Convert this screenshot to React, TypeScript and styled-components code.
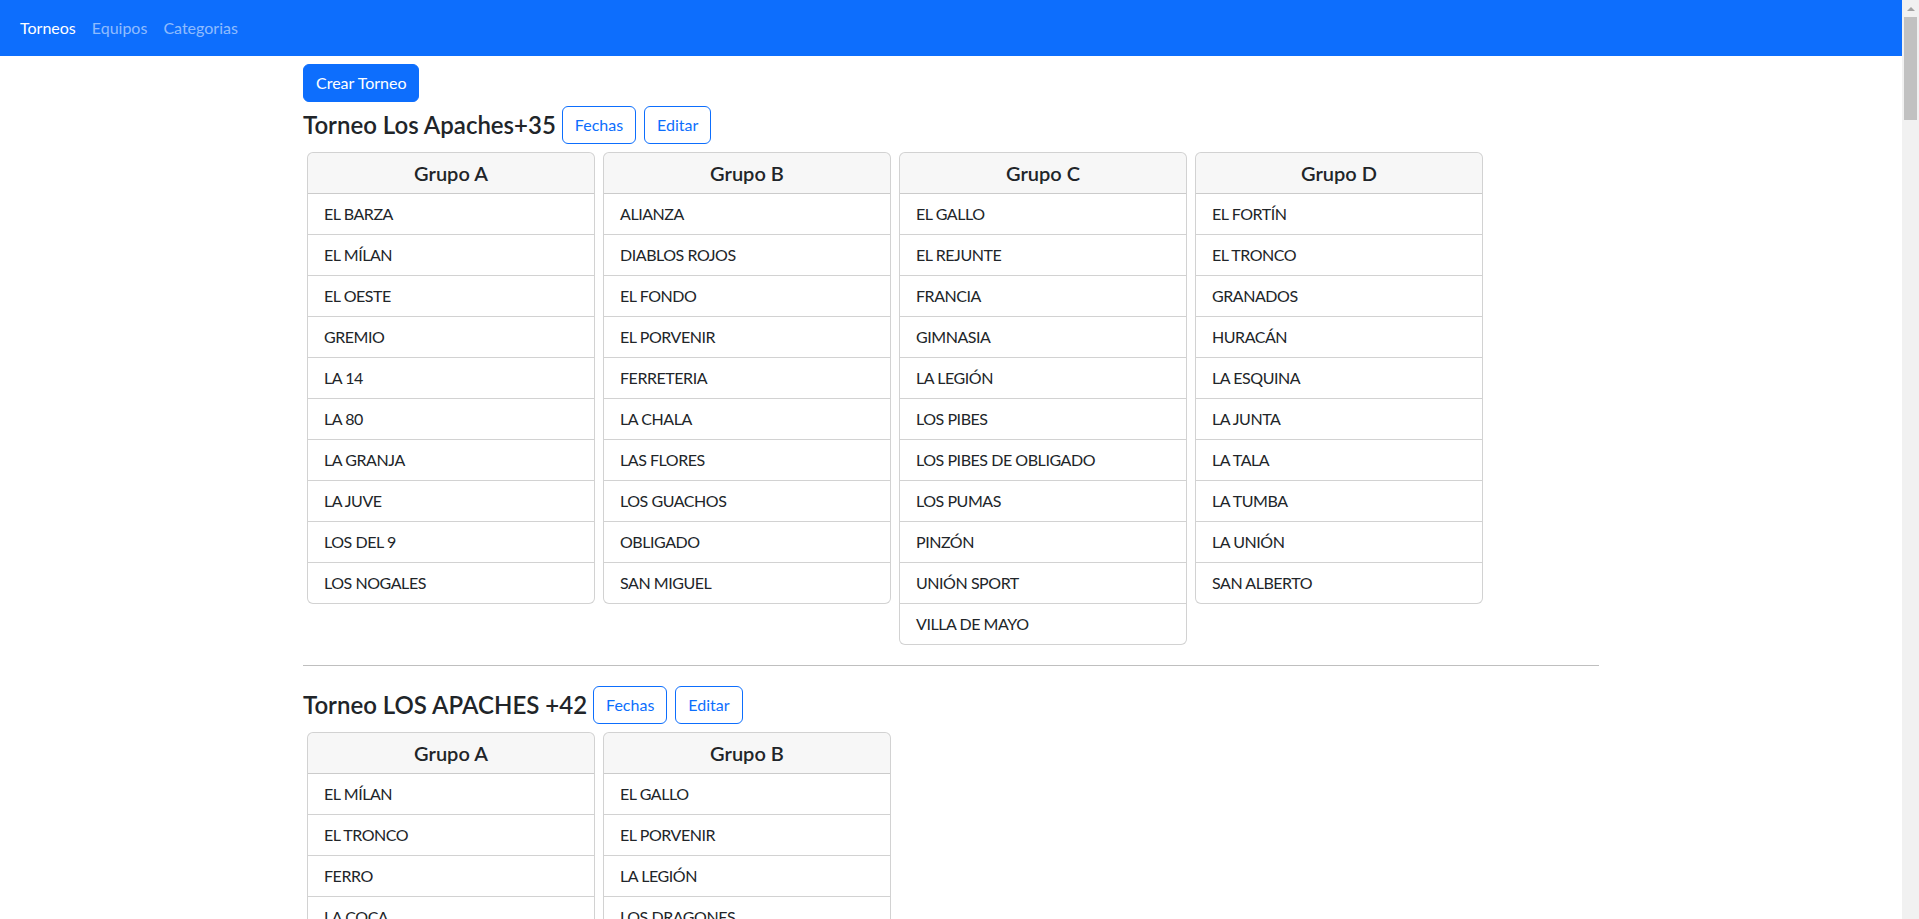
import React from "react";
import styled, { createGlobalStyle } from "styled-components";

const GlobalStyle = createGlobalStyle`
  *, *::before, *::after { box-sizing: border-box; }
  body {
    margin: 0 17px 0 0;
    font-family: Lato, "Open Sans", "Liberation Sans", sans-serif;
    font-size: 16px;
    line-height: 1.5;
    color: #212529;
    background: #fff;
  }
`;

const ScrollTrack = styled.div`
  position: fixed;
  top: 0;
  right: 0;
  width: 17px;
  height: 100vh;
  background: #f1f1f1;
  display: flex;
  flex-direction: column;
  align-items: center;
  z-index: 10;
`;

const ScrollArrow = styled.div`
  height: 17px;
  display: flex;
  align-items: center;
  justify-content: center;
  &::before {
    content: "";
    width: 0;
    height: 0;
    border-left: 4px solid transparent;
    border-right: 4px solid transparent;
    border-bottom: 4px solid #a3a3a3;
  }
`;

const ScrollThumb = styled.div`
  width: 13px;
  height: 103px;
  background: #c1c1c1;
`;

const NavBar = styled.nav`
  background: #0d6efd;
  height: 56px;
  padding: 8px 12px;
  display: flex;
  align-items: center;
`;

const NavLink = styled.a<{ $active?: boolean }>`
  padding: 8px;
  line-height: 24px;
  font-size: 16px;
  color: ${(p) => (p.$active ? "#fff" : "rgba(255,255,255,0.55)")};
  text-decoration: none;
  cursor: pointer;
`;

const Container = styled.main`
  max-width: 1320px;
  margin: 0 auto;
  padding: 8px 12px 0;
`;

const Button = styled.button<{ $outline?: boolean }>`
  font-family: inherit;
  font-size: 16px;
  line-height: 24px;
  padding: 6px 12px;
  border-radius: 6px;
  border: 1px solid #0d6efd;
  background: ${(p) => (p.$outline ? "transparent" : "#0d6efd")};
  color: ${(p) => (p.$outline ? "#0d6efd" : "#fff")};
  cursor: pointer;
`;

const TitleRow = styled.div`
  display: flex;
  align-items: center;
  height: 46px;
  gap: 8px;
`;

const Title = styled.h4`
  margin: 0 -2px 0 0;
  font-size: 24px;
  font-weight: 600;
  line-height: 1.2;
`;

const CardWrap = styled.div`
  display: flex;
  flex-wrap: wrap;
  align-items: flex-start;
`;

const Card = styled.div`
  width: 288px;
  margin: 4px;
  border: 1px solid rgba(0, 0, 0, 0.175);
  border-radius: 6px;
  overflow: hidden;
  background: #fff;
`;

const CardHeader = styled.div`
  padding: 8px 16px;
  background: rgba(0, 0, 0, 0.03);
  border-bottom: 1px solid rgba(0, 0, 0, 0.175);
  text-align: center;
  font-size: 20px;
  font-weight: 600;
  line-height: 24px;
`;

const Item = styled.div`
  padding: 8px 16px;
  line-height: 24px;
  letter-spacing: -0.45px;
  border-bottom: 1px solid rgba(0, 0, 0, 0.175);
  &:last-child { border-bottom: 0; }
`;

const Divider = styled.hr`
  margin: 16px 0;
  border: 0;
  border-top: 1px solid rgba(0, 0, 0, 0.25);
`;

type Torneo = { name: string; groups: { name: string; teams: string[] }[] };

const torneos: Torneo[] = [
  {
    name: "Torneo Los Apaches+35",
    groups: [
      { name: "Grupo A", teams: ["EL BARZA", "EL MÍLAN", "EL OESTE", "GREMIO", "LA 14", "LA 80", "LA GRANJA", "LA JUVE", "LOS DEL 9", "LOS NOGALES"] },
      { name: "Grupo B", teams: ["ALIANZA", "DIABLOS ROJOS", "EL FONDO", "EL PORVENIR", "FERRETERIA", "LA CHALA", "LAS FLORES", "LOS GUACHOS", "OBLIGADO", "SAN MIGUEL"] },
      { name: "Grupo C", teams: ["EL GALLO", "EL REJUNTE", "FRANCIA", "GIMNASIA", "LA LEGIÓN", "LOS PIBES", "LOS PIBES DE OBLIGADO", "LOS PUMAS", "PINZÓN", "UNIÓN SPORT", "VILLA DE MAYO"] },
      { name: "Grupo D", teams: ["EL FORTÍN", "EL TRONCO", "GRANADOS", "HURACÁN", "LA ESQUINA", "LA JUNTA", "LA TALA", "LA TUMBA", "LA UNIÓN", "SAN ALBERTO"] },
    ],
  },
  {
    name: "Torneo LOS APACHES +42",
    groups: [
      { name: "Grupo A", teams: ["EL MÍLAN", "EL TRONCO", "FERRO", "LA COCA", "LA GRANJA", "LOS NOGALES"] },
      { name: "Grupo B", teams: ["EL GALLO", "EL PORVENIR", "LA LEGIÓN", "LOS DRAGONES", "LOS PUMAS", "SAN MIGUEL"] },
    ],
  },
];

export default function App() {
  return (
    <>
      <GlobalStyle />
      <ScrollTrack>
        <ScrollArrow />
        <ScrollThumb />
      </ScrollTrack>
      <NavBar>
        <NavLink $active>Torneos</NavLink>
        <NavLink>Equipos</NavLink>
        <NavLink>Categorias</NavLink>
      </NavBar>
      <Container>
        <Button>Crear Torneo</Button>
        {torneos.map((t, i) => (
          <section key={t.name}>
            {i > 0 && <Divider />}
            <TitleRow>
              <Title>{t.name}</Title>
              <Button $outline>Fechas</Button>
              <Button $outline>Editar</Button>
            </TitleRow>
            <CardWrap>
              {t.groups.map((g) => (
                <Card key={g.name}>
                  <CardHeader>{g.name}</CardHeader>
                  {g.teams.map((team) => (
                    <Item key={team}>{team}</Item>
                  ))}
                </Card>
              ))}
            </CardWrap>
          </section>
        ))}
      </Container>
    </>
  );
}
